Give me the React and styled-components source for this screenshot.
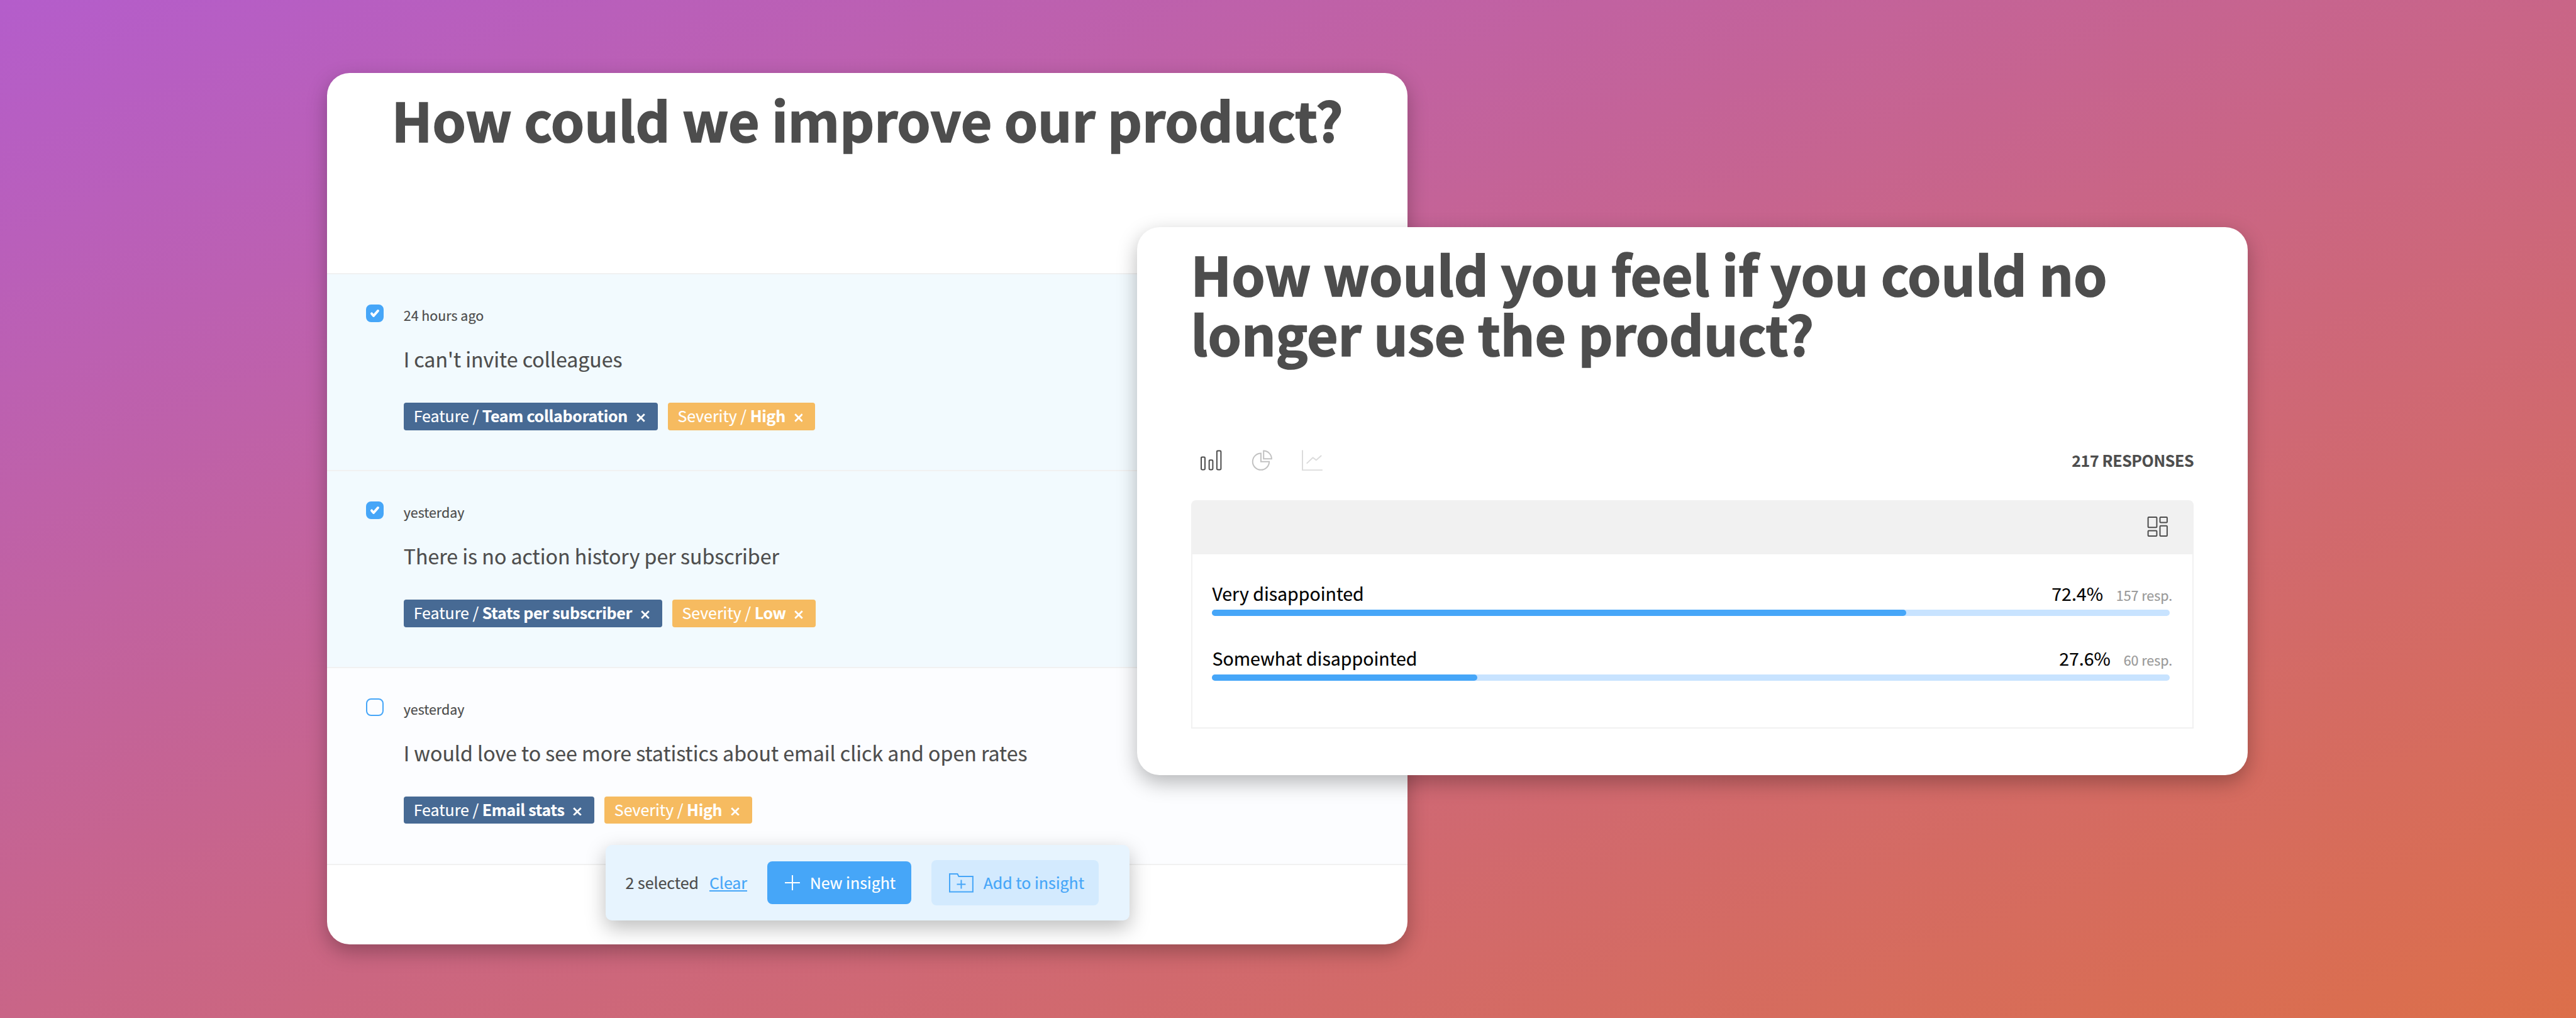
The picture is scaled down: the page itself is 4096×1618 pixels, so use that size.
import React from "react";
import styled, { createGlobalStyle } from "styled-components";

const blue = "#46a6f8";
const ink = "#4d4d4d";
const line = "#f1f1f1";

const GlobalStyle = createGlobalStyle`
  *, *::before, *::after { box-sizing: border-box; }
  html, body { margin: 0; padding: 0; }
  body {
    font-family: "Noto Sans CJK SC", "Noto Sans", sans-serif;
    color: ${ink};
    overflow: hidden;
    -webkit-text-stroke: 0.2px currentColor;
  }
  h1, p { margin: 0; }
  svg { display: block; flex: none; }
`;

const Canvas = styled.main`
  width: 4096px;
  height: 1618px;
  overflow: hidden;
  background: linear-gradient(to bottom right, #b45dcb 0%, #c96587 50%, #dc6f4a 100%);
`;

const Artboard = styled.div`
  position: relative;
  width: 4110px;
  height: 1624px;
  zoom: 0.9966;
`;

const Window = styled.section`
  position: absolute;
  left: ${(p) => p.$x}px;
  top: ${(p) => p.$y}px;
  width: ${(p) => p.$w}px;
  height: ${(p) => p.$h}px;
  background: #fff;
  border-radius: 36px;
  box-shadow: 0 12px 32px rgba(0, 0, 0, 0.28);
  display: flex;
  flex-direction: column;
`;

const Title = styled.h1`
  font-size: 85.7px;
  line-height: 96px;
  font-weight: 700;
  white-space: pre-line;
  text-align: ${(p) => p.$align || "left"};
  -webkit-text-stroke: 1.7px currentColor;
`;

const Header = styled.header`
  height: 322px;
  padding-top: 26px;
  border-bottom: 2.01px solid ${line};
`;

const Row = styled.article`
  display: flex;
  gap: 32px;
  height: 314px;
  padding: 48px 62px 0;
  background: ${(p) => (p.$selected ? "#f2fafe" : "#fcfdff")};
  border-bottom: 2.01px solid ${line};
`;

const Checkbox = styled.span`
  flex: none;
  width: 28px;
  height: 28px;
  border: 2.01px solid ${blue};
  border-radius: 8px;
  background: ${(p) => (p.$checked ? blue : "transparent")};
  display: flex;
  align-items: center;
  justify-content: center;
`;

const RowBody = styled.div`
  display: flex;
  flex-direction: column;
  padding-top: 1px;
`;

const Time = styled.p`
  font-size: 21.5px;
  line-height: 32px;
`;

const Feedback = styled.p`
  font-size: 32.2px;
  line-height: 48px;
  margin-top: 30px;
`;

const Tags = styled.div`
  display: flex;
  gap: 16px;
  margin-top: 45px;
`;

const Tag = styled.span`
  display: flex;
  align-items: center;
  height: 44px;
  padding: 0 20px 2px 16px;
  border-radius: 4px;
  background: ${(p) => p.$color};
  color: #fff;
  font-size: 25px;
  line-height: 42px;
  white-space: pre;
  b { letter-spacing: -0.26px; }
  svg { margin: 6px 0 0 13.7px; }
`;

const Toolbar = styled.div`
  position: absolute;
  left: 444px;
  top: 1232px;
  width: 836px;
  height: 120px;
  padding: 0 32px;
  display: flex;
  align-items: center;
  background: #e7f4fe;
  border-radius: 10px;
  box-shadow: 0 12px 32px rgba(0, 0, 0, 0.26);
  font-size: 25px;
  line-height: 40px;
`;

const Selected = styled.span`
  padding-bottom: 1px;
`;

const ClearLink = styled.a`
  margin-left: 17px;
  padding-bottom: 1px;
  color: ${blue};
  text-decoration: underline;
  text-decoration-thickness: 2px;
  text-underline-offset: 2px;
`;

const Button = styled.button`
  display: flex;
  align-items: center;
  width: ${(p) => p.$w}px;
  height: ${(p) => p.$h}px;
  margin-left: 32px;
  padding: 0 0 1px 28px;
  gap: 16px;
  border: 0;
  border-radius: 8px;
  background: ${(p) => (p.$primary ? blue : "#d3eafe")};
  color: ${(p) => (p.$primary ? "#fff" : blue)};
  font: inherit;
  white-space: nowrap;
  svg { margin-top: 1px; }
`;

const Body = styled.div`
  padding: 26px 86px 0;
`;

const ChartBar = styled.div`
  display: flex;
  align-items: center;
  justify-content: space-between;
  height: 40px;
  margin-top: 134px;
  padding-left: 16px;
`;

const Icons = styled.div`
  display: flex;
  gap: 46px;
`;

const Count = styled.span`
  font-size: 25px;
  line-height: 40px;
  font-weight: 600;
  letter-spacing: -0.35px;
`;

const Panel = styled.div`
  height: 364px;
  margin-top: 44px;
  border: 2.01px solid ${line};
  border-radius: 8px 8px 0 0;
`;

const PanelHead = styled.div`
  display: flex;
  justify-content: flex-end;
  align-items: flex-start;
  height: 84px;
  padding: 24px 39px 0 0;
  background: ${line};
`;

const Answer = styled.div`
  height: 104px;
  padding: 0 36px 0 32px;
  margin-top: ${(p) => (p.$first ? 40 : 0)}px;
`;

const AnswerHead = styled.div`
  display: flex;
  align-items: baseline;
  height: 48px;
  margin-right: -4px;
  color: #000;
  font-size: 28.6px;
  line-height: 45px;
`;

const Label = styled.span`
  flex: 1;
`;

const Resp = styled.span`
  margin-left: 21px;
  color: #999;
  font-size: 21.5px;
`;

const Track = styled.div`
  height: 10px;
  border-radius: 5px;
  background: #c8e3ff;
`;

const Fill = styled.div`
  height: 10px;
  border-radius: 5px;
  background: ${blue};
`;

const Check = () => (
  <svg width="16" height="14" viewBox="0 0 16 14" fill="none" stroke="#fff" strokeWidth="4" strokeLinecap="round" strokeLinejoin="round">
    <path d="M3 7.500 6 11 13 3" />
  </svg>
);

const Cross = () => (
  <svg width="14" height="14" viewBox="0 0 14 14" stroke="#fff" strokeWidth="2.8">
    <path d="M1.200 1.200 12.800 12.800M12.800 1.200 1.200 12.800" />
  </svg>
);

const Plus = () => (
  <svg width="24" height="24" viewBox="0 0 24 24" stroke="#fff" strokeWidth="2">
    <path d="M12 0V24M0 12H24" />
  </svg>
);

const FolderPlus = () => (
  <svg width="39" height="31" viewBox="0 0 39 31" fill="none" stroke={blue} strokeWidth="2">
    <path d="M1 1H13.500L15.500 5H38V29.500H1ZM19.500 10.500V24.500M12.500 17.500H26.500" />
  </svg>
);

const BarsIcon = () => (
  <svg width="34" height="34" viewBox="0 0 34 34" fill="none" stroke={ink} strokeWidth="2">
    <rect x="1" y="11.500" width="6" height="20" rx="1.500" />
    <rect x="13.700" y="16.200" width="5.800" height="15.300" rx="1.500" />
    <rect x="26" y="1.500" width="6.500" height="30" rx="1.500" />
  </svg>
);

const PieIcon = () => (
  <svg width="34" height="34" viewBox="0 0 34 34" fill="none" stroke="#c2c2c2" strokeWidth="2">
    <path d="M16 5.500A13.200 13.200 0 1 0 29.200 18.700H16Z" />
    <path d="M20.300 1.500A13 12.800 0 0 1 33 14.300H20.300Z" />
  </svg>
);

const LineIcon = () => (
  <svg width="34" height="34" viewBox="0 0 34 34" fill="none" stroke="#dcdcdc" strokeWidth="2" strokeLinejoin="round">
    <path d="M2 .5V32.300H34" />
    <path d="M9.300 21.200 18.700 12.300 24 16.400 31.700 9.500" strokeLinecap="round" />
  </svg>
);

const GridIcon = () => (
  <svg width="34" height="34" viewBox="0 0 34 34" fill="none" stroke={ink} strokeWidth="2">
    <rect x="2.600" y="1" width="13.900" height="16.300" rx="1" />
    <rect x="21.600" y="1" width="11.400" height="8.500" rx="1" />
    <rect x="2.600" y="22.600" width="13.900" height="8.400" rx="1" />
    <rect x="21.600" y="14.700" width="11.400" height="16.300" rx="1" />
  </svg>
);

const feedback = [
  { time: "24 hours ago", text: "I can't invite colleagues", feature: "Team collaboration", severity: "High", selected: true },
  { time: "yesterday", text: "There is no action history per subscriber", feature: "Stats per subscriber", severity: "Low", selected: true },
  { time: "yesterday", text: "I would love to see more statistics about email click and open rates", feature: "Email stats", severity: "High", selected: false },
];

const answers = [
  { label: "Very disappointed", pct: "72.4%", value: 72.5, resp: "157 resp." },
  { label: "Somewhat disappointed", pct: "27.6%", value: 27.7, resp: "60 resp." },
];

export default function App() {
  return (
    <Canvas>
      <GlobalStyle />
      <Artboard>
        <Window $x={522} $y={116} $w={1724} $h={1390}>
          <Header>
            <Title $align="center">How could we improve our product?</Title>
          </Header>
          {feedback.map((f) => (
            <Row key={f.text} $selected={f.selected}>
              <Checkbox $checked={f.selected}>{f.selected && <Check />}</Checkbox>
              <RowBody>
                <Time>{f.time}</Time>
                <Feedback>{f.text}</Feedback>
                <Tags>
                  <Tag $color="#476a94">Feature / <b>{f.feature}</b><Cross /></Tag>
                  <Tag $color="#f6bb60">Severity / <b>{f.severity}</b><Cross /></Tag>
                </Tags>
              </RowBody>
            </Row>
          ))}
          <Toolbar>
            <Selected>2 selected</Selected>
            <ClearLink>Clear</ClearLink>
            <Button $primary $w={230} $h={68}><Plus />New insight</Button>
            <Button $w={267} $h={72}><FolderPlus />Add to insight</Button>
          </Toolbar>
        </Window>
        <Window $x={1814} $y={362} $w={1772} $h={874}>
          <Body>
            <Title>{"How would you feel if you could no\nlonger use the product?"}</Title>
            <ChartBar>
              <Icons><BarsIcon /><PieIcon /><LineIcon /></Icons>
              <Count>217 RESPONSES</Count>
            </ChartBar>
            <Panel>
              <PanelHead><GridIcon /></PanelHead>
              {answers.map((a, i) => (
                <Answer key={a.label} $first={i === 0}>
                  <AnswerHead>
                    <Label>{a.label}</Label>
                    <span>{a.pct}</span>
                    <Resp>{a.resp}</Resp>
                  </AnswerHead>
                  <Track><Fill style={{ width: `${a.value}%` }} /></Track>
                </Answer>
              ))}
            </Panel>
          </Body>
        </Window>
      </Artboard>
    </Canvas>
  );
}
